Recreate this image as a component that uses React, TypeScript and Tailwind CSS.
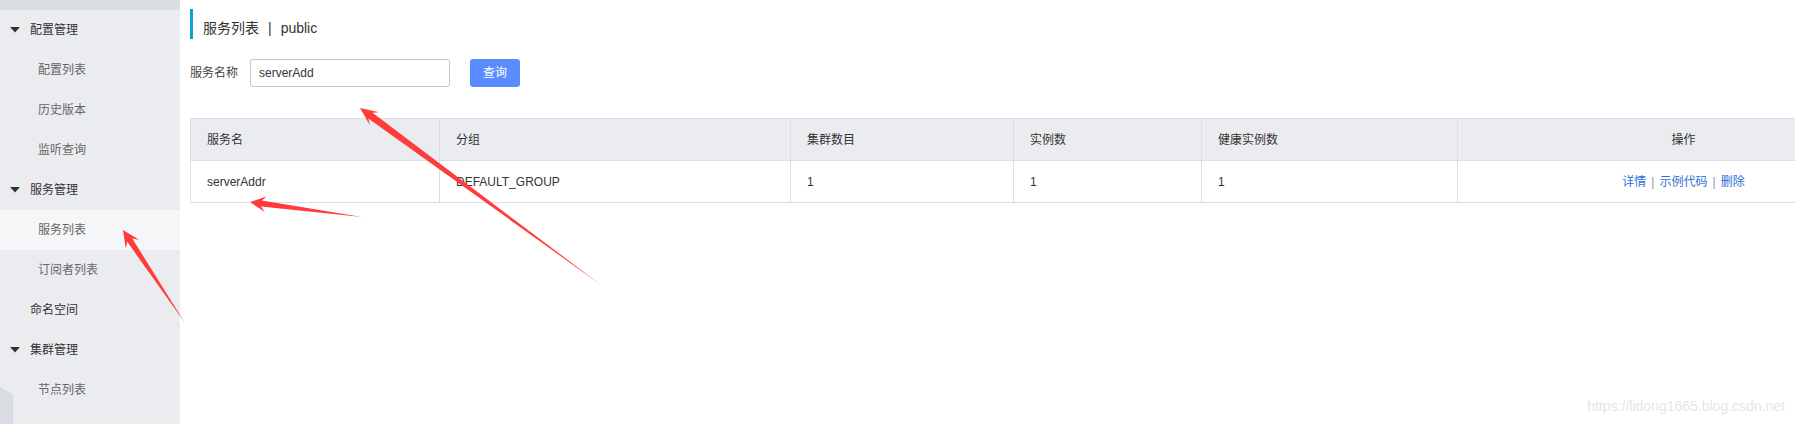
import React from "react";

const font = { fontFamily: '"Liberation Sans", "Noto Sans CJK SC", sans-serif' };

type Pt = [number, number];

function arrowPoints(tail: Pt, tip: Pt, headLen: number, headW: number, neckW: number) {
  const [x1, y1] = tail;
  const [x2, y2] = tip;
  const len = Math.hypot(x2 - x1, y2 - y1);
  const ux = (x2 - x1) / len;
  const uy = (y2 - y1) / len;
  const nx = -uy;
  const ny = ux;
  const bx = x2 - ux * headLen;
  const by = y2 - uy * headLen;
  const nbx = x2 - ux * headLen * 0.72;
  const nby = y2 - uy * headLen * 0.72;
  const pts: Pt[] = [
    [x1, y1],
    [nbx + nx * neckW, nby + ny * neckW],
    [bx + nx * headW, by + ny * headW],
    [x2, y2],
    [bx - nx * headW, by - ny * headW],
    [nbx - nx * neckW, nby - ny * neckW],
  ];
  return pts.map((p) => p.join(",")).join(" ");
}

const menu = [
  { label: "配置管理", group: true },
  { label: "配置列表" },
  { label: "历史版本" },
  { label: "监听查询" },
  { label: "服务管理", group: true },
  { label: "服务列表", active: true },
  { label: "订阅者列表" },
  { label: "命名空间", top: true },
  { label: "集群管理", group: true },
  { label: "节点列表" },
];

const columns = [
  { title: "服务名", w: "w-[249px]" },
  { title: "分组", w: "w-[351px]" },
  { title: "集群数目", w: "w-[223px]" },
  { title: "实例数", w: "w-[188px]" },
  { title: "健康实例数", w: "w-[256px]" },
  { title: "操作", w: "w-[452px]", center: true },
];

const row = ["serverAddr", "DEFAULT_GROUP", "1", "1", "1"];

export default function App() {
  return (
    <div className="relative flex w-[1795px] h-[424px] overflow-hidden bg-white" style={font}>
      {/* sidebar */}
      <aside className="relative w-[180px] shrink-0 bg-[#ebecf0]">
        <div className="h-[10px] bg-[#dadde3]" />
        {menu.map((m) => (
          <div
            key={m.label}
            className={`flex h-[40px] items-center text-[12px] ${
              m.active ? "bg-[#f5f6f8]" : ""
            } ${m.group || m.top ? "text-[#333]" : "pl-[38px] text-[#666]"}`}
          >
            {m.group && (
              <svg width="10" height="6" viewBox="0 0 10 6" className="ml-[10px] mr-[10px]">
                <path d="M0 0 H10 L5 5.5 Z" fill="#333" />
              </svg>
            )}
            {m.top && <span className="w-[30px]" />}
            {m.label}
          </div>
        ))}
        <svg className="absolute left-0 top-[387px]" width="14" height="40" viewBox="0 0 14 40">
          <path d="M0 0 L13 8 V40 H0 Z" fill="#d9dce2" />
        </svg>
      </aside>

      {/* main */}
      <main className="flex-1 min-w-0 overflow-hidden pl-[10px] pt-[9px]">
        <div className="flex h-[30px] items-center border-l-[3px] border-[#0ca0d6] pl-[10px] pt-[8px] text-[14px] text-[#333]">
          服务列表<span className="mx-[9px]">|</span>public
        </div>

        <div className="mt-[20px] flex h-[28px] items-center text-[12px] text-[#333]">
          <span className="w-[60px] text-[#444]">服务名称</span>
          <div className="flex h-[28px] w-[200px] items-center rounded-[3px] border border-[#c4c6cf] px-[8px]">
            serverAdd
          </div>
          <button className="ml-[20px] h-[28px] w-[50px] rounded-[3px] bg-[#5b8cff] text-[12px] text-white">
            查询
          </button>
        </div>

        <table className="mt-[31px] w-[1719px] min-w-[1719px] table-fixed border-collapse text-[12px] text-[#333]">
          <thead>
            <tr className="h-[42px] bg-[#ebecf0]">
              {columns.map((c) => (
                <th
                  key={c.title}
                  className={`${c.w} border border-[#dcdee3] px-[16px] font-normal ${
                    c.center ? "text-center" : "text-left"
                  }`}
                >
                  {c.title}
                </th>
              ))}
            </tr>
          </thead>
          <tbody>
            <tr className="h-[42px]">
              {row.map((v, i) => (
                <td key={i} className="border border-[#dcdee3] px-[16px]">
                  {v}
                </td>
              ))}
              <td className="border border-[#dcdee3] px-[16px] text-center">
                <span className="text-[#2e6fd6]">详情</span>
                <span className="mx-[5px] text-[#8a94a8]">|</span>
                <span className="text-[#2e6fd6]">示例代码</span>
                <span className="mx-[5px] text-[#8a94a8]">|</span>
                <span className="text-[#2e6fd6]">删除</span>
              </td>
            </tr>
          </tbody>
        </table>
      </main>

      {/* annotation arrows */}
      <svg className="pointer-events-none absolute left-0 top-0" width="1795" height="424">
        <polygon points={arrowPoints([601, 285], [360, 108], 18, 8, 3.5)} fill="#ff3b3b" />
        <polygon points={arrowPoints([362, 217], [250, 202], 16, 8, 3)} fill="#ff3b3b" />
        <polygon points={arrowPoints([185, 323], [123, 230], 17, 8, 3)} fill="#ff3b3b" />
      </svg>

      <div className="absolute right-[10px] bottom-[7px] text-[14px] text-[#e6e6e6]">
        https://lidong1665.blog.csdn.net
      </div>
    </div>
  );
}
